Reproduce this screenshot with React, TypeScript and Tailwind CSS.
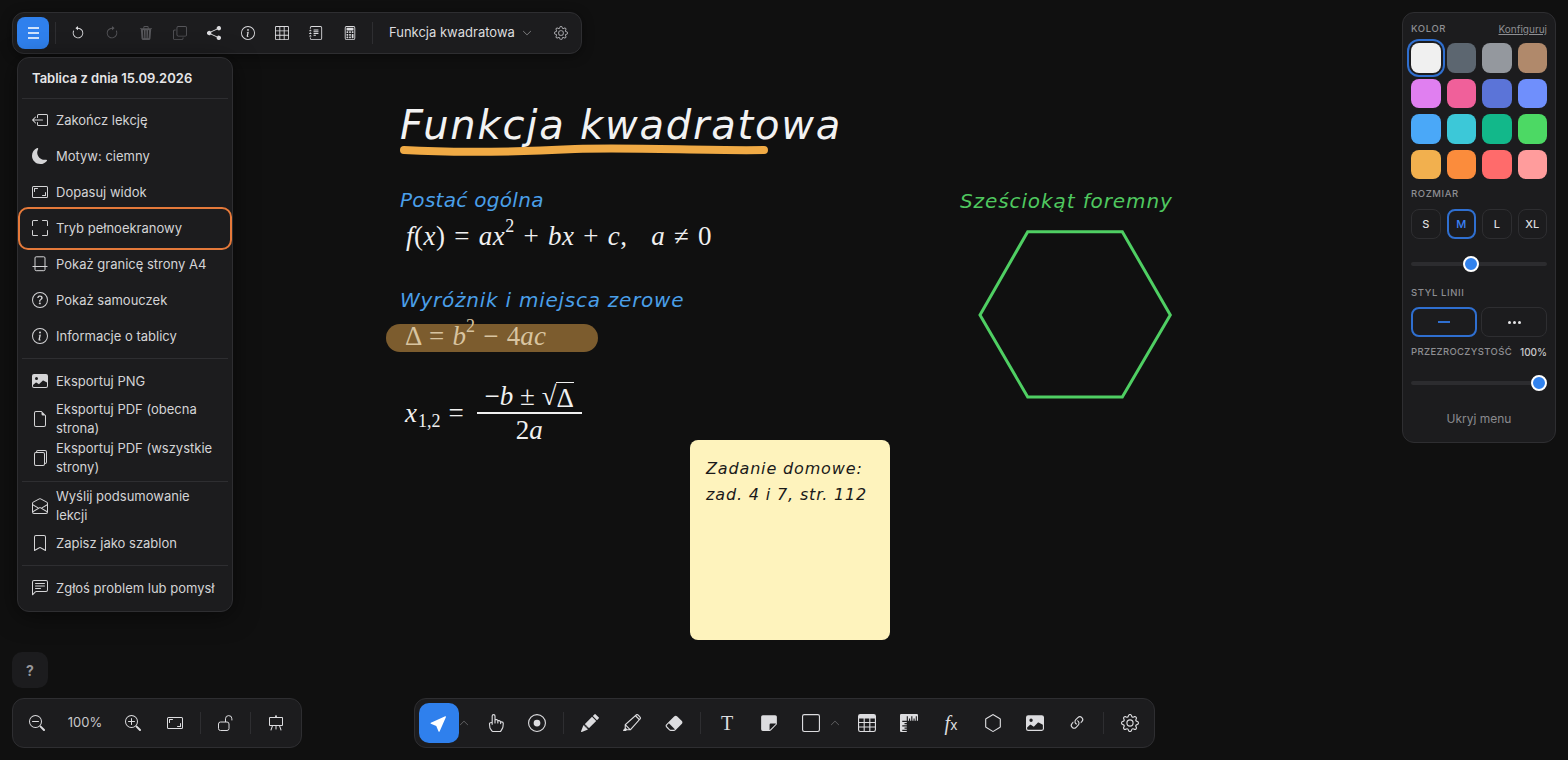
import React from "react";
import {
  BsArrowCounterclockwise, BsArrowClockwise, BsTrash3Fill, BsCopy, BsShareFill, BsInfoCircle, BsTable, BsJournalText,
  BsCalculator, BsChevronDown, BsChevronUp, BsGear, BsBoxArrowLeft, BsMoonFill, BsAspectRatio, BsFullscreen,
  BsQuestionCircle, BsImageFill, BsFileEarmark, BsFiles, BsEnvelopeOpen, BsBookmark, BsChatLeftText, BsZoomOut, BsZoomIn,
  BsEasel, BsCursorFill, BsHandIndex, BsRecordCircle, BsPencilFill, BsHighlighter, BsEraserFill,
  BsStickyFill, BsSquare, BsRulers, BsHexagon, BsLink45Deg, BsGrid3X3,
} from "react-icons/bs";

const Sep = () => <div className="w-px h-[22px] bg-[#2e2e31] shrink-0" />;
const HSep = () => <div className="h-px bg-[#2e2e31] mx-[4px] my-[4px]" />;

function TopBtn({ children, off }: { children: React.ReactNode; off?: boolean }) {
  return <div className={`w-[34px] h-[32px] flex items-center justify-center text-[14px] ${off ? "text-[#56565a]" : "text-[#dcdcdf]"}`}>{children}</div>;
}

function Tool({ children, size = "text-[18px]" }: { children: React.ReactNode; size?: string }) {
  return <div className={`w-[42px] h-[40px] flex items-center justify-center text-[#dcdcdf] ${size}`}>{children}</div>;
}

function A4Icon() {
  return (
    <svg width="16" height="16" viewBox="0 0 16 16" fill="none" stroke="currentColor" strokeWidth="1">
      <path d="M3 10.5V2a1.2 1.2 0 0 1 1.2-1.2h7.6A1.2 1.2 0 0 1 13 2v8.5" />
      <path d="M.5 10.5h15" />
      <path d="M3 10.5v3a1.2 1.2 0 0 0 1.2 1.2h7.6a1.2 1.2 0 0 0 1.2-1.2v-3" />
    </svg>
  );
}

function OpenLock() {
  return (
    <svg className="ml-[17px] shrink-0" width="16" height="16" viewBox="0 0 16 16" fill="none" stroke="currentColor" strokeWidth="1">
      <rect x="0.5" y="7" width="10.5" height="8.5" rx="2" />
      <path d="M7.5 7V3.8a3.2 3.2 0 0 1 6.4 0v1.6" />
    </svg>
  );
}

function MenuItem({ icon, children, two, active }: { icon: React.ReactNode; children: React.ReactNode; two?: boolean; active?: boolean }) {
  return (
    <div className={`relative flex items-center mx-px pl-[13px] pr-[6px] ${two ? "h-[39px]" : "h-[36px]"}`}>
      {active && <div className="absolute left-[-1px] right-[-1px] top-[-3px] bottom-[-4px] rounded-[10px] border-2 border-[#e5793a]" />}
      <div className="w-[16px] h-[16px] shrink-0 flex items-center justify-center text-[16px] text-[#d4d4d6]">{icon}</div>
      <div className="ml-[8px] text-[13px] leading-[19px] text-[#d4d4d6]">{children}</div>
    </div>
  );
}

const swatches = [
  "#f0f0f0", "#5c6670", "#94989e", "#b0896b",
  "#e07ff0", "#f0609a", "#5b74d8", "#6f8ffc",
  "#4aa8f8", "#3cc8d8", "#12b88a", "#4cd964",
  "#f2b04e", "#fb8c3c", "#ff6b6b", "#ff9c9c",
];

const Label = ({ children }: { children: React.ReactNode }) => (
  <div className="text-[9.5px] leading-[12px] tracking-[0.6px] font-medium text-[#8e8e92] uppercase">{children}</div>
);

function Slider({ pos }: { pos: string }) {
  return (
    <div className="relative h-[4px] rounded-full bg-[#2c2c2f]">
      <div className={`absolute top-[-6px] w-[16px] h-[16px] rounded-full bg-[#3182ed] border-2 border-white ${pos}`} />
    </div>
  );
}

const I = ({ children }: { children: React.ReactNode }) => <i>{children}</i>;
const Sup = ({ children }: { children: React.ReactNode }) => <sup className="text-[18px] leading-none relative top-[-3px] align-super">{children}</sup>;

const mathFont = "[font-family:'Liberation_Serif',serif]";
const handFont = "[font-family:'DejaVu_Sans',sans-serif] italic";

export default function App() {
  return (
    <div className="relative w-full h-screen overflow-hidden bg-[#101010] [font-family:'Inter',sans-serif]">
      {/* canvas */}
      <div className={`absolute left-[400px] top-[99px] text-[40px] leading-[52px] tracking-[1.8px] text-[#f2f2f2] whitespace-nowrap ${handFont}`}>Funkcja kwadratowa</div>
      <svg className="absolute left-[395px] top-[140px]" width="380" height="20" viewBox="0 0 380 20" fill="none">
        <path d="M9 10C60 13 120 12 180 9C240 7 310 11 369 10" stroke="#f0aa45" strokeWidth="8" strokeLinecap="round" />
      </svg>
      <div className={`absolute left-[400px] top-[186px] text-[20px] leading-[28px] tracking-[0.3px] text-[#4a9fe8] whitespace-nowrap ${handFont}`}>Postać ogólna</div>
      <div className={`absolute left-[406px] top-[219px] text-[27px] leading-[34px] tracking-[0.5px] [word-spacing:1.5px] text-[#f0f0f0] whitespace-nowrap ${mathFont}`}>
        <I>f</I>(<I>x</I>) = <I>ax</I><Sup>2</Sup> + <I>bx</I> + <I>c</I>, <span className="ml-[15px]"><I>a</I> ≠ 0</span>
      </div>
      <div className={`absolute left-[400px] top-[286px] text-[20px] leading-[28px] tracking-[0.75px] text-[#4a9fe8] whitespace-nowrap ${handFont}`}>Wyróżnik i miejsca zerowe</div>
      <div className="absolute left-[386px] top-[324px] w-[212px] h-[28px] rounded-full bg-[#7c5c2e]" />
      <div className={`absolute left-[405px] top-[319px] text-[27px] leading-[34px] tracking-[0.2px] [word-spacing:1px] text-[#d8c4a0] whitespace-nowrap ${mathFont}`}>
        Δ = <I>b</I><Sup>2</Sup> − 4<I>ac</I>
      </div>
      <div className={`absolute left-[405px] top-[380px] flex items-center text-[27px] text-[#f0f0f0] whitespace-nowrap ${mathFont}`}>
        <div className="flex items-baseline"><I>x</I><span className="text-[18px] ml-px relative top-[5px]">1,2</span><span className="ml-[8px]">=</span></div>
        <div className="ml-[13px] flex flex-col items-center w-[105px]">
          <div className="h-[32px] leading-[32px] flex"><span>−<I>b</I> ± √</span><span className="border-t border-[#f0f0f0] leading-[30px] h-[30px] mt-[2px]">Δ</span></div>
          <div className="w-full h-[2px] bg-[#f0f0f0]" />
          <div className="h-[32px] leading-[32px]">2<I>a</I></div>
        </div>
      </div>
      <div className={`absolute left-[960px] top-[186px] text-[20px] leading-[30px] tracking-[0.9px] text-[#4fc85f] whitespace-nowrap ${handFont}`}>Sześciokąt foremny</div>
      <svg className="absolute left-[975px] top-[225px]" width="202" height="180" viewBox="975 225 202 180" fill="none">
        <polygon points="1027.7,231.7 1122.3,231.7 1170.3,315 1122.3,397 1027.7,397 980,315" stroke="#4fcf63" strokeWidth="3" />
      </svg>
      <div className="absolute left-[690px] top-[440px] w-[200px] h-[200px] rounded-[8px] bg-[#fef3bd] pl-[16px] pt-[16px]">
        <div className={`text-[16px] leading-[26px] tracking-[0.85px] text-[#1a1a1a] whitespace-nowrap ${handFont}`}>
          <div>Zadanie domowe:</div>
          <div>zad. 4 i 7, str. 112</div>
        </div>
      </div>

      {/* top bar */}
      <div className="absolute left-[12px] top-[12px] w-[570px] h-[42px] rounded-[12px] border border-[#2e2e31] bg-[#1c1c1e] flex items-center pl-[4px] shadow-[0_2px_12px_rgba(0,0,0,0.4)]">
        <div className="w-[32px] h-[32px] rounded-[8px] bg-[#2f80ed] flex items-center justify-center shrink-0">
          <div className="flex flex-col gap-[3px]">
            <div className="w-[11px] h-[2px] bg-[#cfe2fb]" />
            <div className="w-[11px] h-[2px] bg-[#cfe2fb]" />
            <div className="w-[11px] h-[2px] bg-[#cfe2fb]" />
          </div>
        </div>
        <div className="ml-[6px]"><Sep /></div>
        <div className="ml-[5px] flex items-center">
          <TopBtn><BsArrowCounterclockwise /></TopBtn>
          <TopBtn off><BsArrowClockwise /></TopBtn>
          <TopBtn off><BsTrash3Fill /></TopBtn>
          <TopBtn off><BsCopy /></TopBtn>
          <TopBtn><BsShareFill /></TopBtn>
          <TopBtn><BsInfoCircle /></TopBtn>
          <TopBtn><BsGrid3X3 /></TopBtn>
          <TopBtn><BsJournalText /></TopBtn>
          <TopBtn><BsCalculator /></TopBtn>
        </div>
        <div className="ml-[5px]"><Sep /></div>
        <div className="ml-[16px] text-[13px] text-[#dcdcdf] whitespace-nowrap">Funkcja kwadratowa</div>
        <BsChevronDown className="ml-[7px] text-[10px] text-[#a0a0a4]" />
        <BsGear className="ml-[22px] text-[14px] text-[#a8a8ac]" />
      </div>

      {/* main menu */}
      <div className="absolute left-[17px] top-[57px] w-[216px] h-[555px] rounded-[12px] border border-[#2e2e31] bg-[#1c1c1e] shadow-[0_4px_24px_rgba(0,0,0,0.5)]">
        <div className="h-[40px] flex items-center pl-[14px] pt-[2px] text-[13px] font-semibold text-[#e6e6e8]">Tablica z dnia 15.09.2026</div>
        <div className="h-px bg-[#2e2e31] mx-[4px] mb-[3px]" />
        <MenuItem icon={<BsBoxArrowLeft />}>Zakończ lekcję</MenuItem>
        <MenuItem icon={<BsMoonFill />}>Motyw: ciemny</MenuItem>
        <MenuItem icon={<BsAspectRatio />}>Dopasuj widok</MenuItem>
        <MenuItem icon={<BsFullscreen />} active>Tryb pełnoekranowy</MenuItem>
        <MenuItem icon={<A4Icon />}>Pokaż granicę strony A4</MenuItem>
        <MenuItem icon={<BsQuestionCircle />}>Pokaż samouczek</MenuItem>
        <MenuItem icon={<BsInfoCircle />}>Informacje o tablicy</MenuItem>
        <HSep />
        <MenuItem icon={<BsImageFill />}>Eksportuj PNG</MenuItem>
        <MenuItem icon={<BsFileEarmark />} two>Eksportuj PDF (obecna strona)</MenuItem>
        <MenuItem icon={<BsFiles />} two>Eksportuj PDF (wszystkie strony)</MenuItem>
        <HSep />
        <MenuItem icon={<BsEnvelopeOpen />} two>Wyślij podsumowanie<br />lekcji</MenuItem>
        <MenuItem icon={<BsBookmark />}>Zapisz jako szablon</MenuItem>
        <HSep />
        <MenuItem icon={<BsChatLeftText />}>Zgłoś problem lub pomysł</MenuItem>
      </div>

      {/* help */}
      <div className="absolute left-[12px] top-[652px] w-[36px] h-[36px] rounded-[10px] bg-[#1c1c1e] flex items-center justify-center text-[14px] font-bold text-[#98989c]">?</div>

      {/* zoom bar */}
      <div className="absolute left-[12px] top-[698px] w-[290px] h-[50px] rounded-[12px] border border-[#2e2e31] bg-[#1c1c1e] flex items-center text-[#dcdcdf]">
        <BsZoomOut className="ml-[16px] text-[16px] shrink-0" />
        <div className="w-[48px] ml-[16px] text-center text-[13px] text-[#c8c8cb]">100%</div>
        <BsZoomIn className="ml-[16px] text-[16px] shrink-0" />
        <BsAspectRatio className="ml-[26px] text-[16px] shrink-0" />
        <div className="ml-[17px]"><Sep /></div>
        <OpenLock />
        <div className="ml-[16px]"><Sep /></div>
        <BsEasel className="ml-[17px] text-[16px] shrink-0" />
      </div>

      {/* tools */}
      <div className="absolute left-[414px] top-[698px] w-[741px] h-[50px] rounded-[12px] border border-[#2e2e31] bg-[#1c1c1e] flex items-center pl-[4px]">
        <div className="w-[40px] h-[40px] rounded-[10px] bg-[#2f80ed] flex items-center justify-center shrink-0">
          <BsCursorFill className="text-[18px] text-white" />
        </div>
        <div className="w-[10px] flex justify-center"><BsChevronUp className="text-[10px] text-[#7a7a7e] shrink-0" /></div>
        <div className="ml-[5px] flex items-center">
          <Tool><BsHandIndex /></Tool>
          <Tool><BsRecordCircle /></Tool>
        </div>
        <div className="mx-[5px]"><Sep /></div>
        <Tool><BsPencilFill /></Tool>
        <Tool><BsHighlighter /></Tool>
        <Tool><BsEraserFill /></Tool>
        <div className="mx-[5px]"><Sep /></div>
        <Tool size="text-[20px] font-normal [font-family:'Liberation_Serif',serif]">T</Tool>
        <Tool><BsStickyFill /></Tool>
        <Tool><BsSquare /></Tool>
        <div className="w-[6px] mr-[8px] flex justify-center"><BsChevronUp className="text-[10px] text-[#7a7a7e] shrink-0" /></div>
        <Tool><BsTable /></Tool>
        <Tool><BsRulers /></Tool>
        <Tool size="text-[20px]"><span className="italic [font-family:'Liberation_Serif',serif]">f<span className="not-italic [font-family:'Inter',sans-serif] text-[14px]">x</span></span></Tool>
        <Tool><BsHexagon /></Tool>
        <Tool><BsImageFill /></Tool>
        <Tool><BsLink45Deg /></Tool>
        <div className="mx-[5px]"><Sep /></div>
        <Tool><BsGear /></Tool>
      </div>

      {/* properties */}
      <div className="absolute left-[1402px] top-[12px] w-[154px] h-[431px] rounded-[12px] border border-[#2e2e31] bg-[#1c1c1e] px-[8px] pt-[9px]">
        <div className="flex items-center justify-between h-[14px]">
          <Label>Kolor</Label>
          <span className="text-[10px] leading-[12px] text-[#8e8e92] underline">Konfiguruj</span>
        </div>
        <div className="mt-[7px] grid grid-cols-4 gap-[6px]">
          {swatches.map((c, i) => (
            <div
              key={c}
              className={`aspect-square rounded-[8px] ${i === 0 ? "ring-2 ring-[#2f6fd0] ring-offset-2 ring-offset-[#1c1c1e]" : ""}`}
              style={{ backgroundColor: c }}
            />
          ))}
        </div>
        <div className="mt-[9px]"><Label>Rozmiar</Label></div>
        <div className="mt-[9px] grid grid-cols-4 gap-[6px]">
          <div className="h-[30px] rounded-[8px] border border-[#2e2e31] flex items-center justify-center text-[11px] font-medium text-[#dcdcdf]">S</div>
          <div className="h-[30px] rounded-[8px] border-2 border-[#2f6fd0] flex items-center justify-center text-[11px] font-medium text-[#3b82f6]">M</div>
          <div className="h-[30px] rounded-[8px] border border-[#2e2e31] flex items-center justify-center text-[11px] font-medium text-[#dcdcdf]">L</div>
          <div className="h-[30px] rounded-[8px] border border-[#2e2e31] flex items-center justify-center text-[11px] font-medium text-[#dcdcdf]">XL</div>
        </div>
        <div className="mt-[23px]"><Slider pos="left-[52px]" /></div>
        <div className="mt-[21px]"><Label>Styl linii</Label></div>
        <div className="mt-[8px] grid grid-cols-2 gap-[4px]">
          <div className="h-[30px] rounded-[8px] border-2 border-[#2f6fd0] flex items-center justify-center">
            <div className="w-[12px] h-[2px] bg-[#2f6fd0]" />
          </div>
          <div className="h-[30px] rounded-[8px] border border-[#2e2e31] flex items-center justify-center gap-[2px]">
            <div className="w-[3px] h-[3px] rounded-full bg-[#e6e6e8]" />
            <div className="w-[3px] h-[3px] rounded-full bg-[#e6e6e8]" />
            <div className="w-[3px] h-[3px] rounded-full bg-[#e6e6e8]" />
          </div>
        </div>
        <div className="mt-[9px] flex items-center justify-between">
          <div className="text-[9.5px] leading-[12px] tracking-[0.35px] font-medium text-[#8e8e92] uppercase">Przezroczystość</div>
          <span className="text-[10px] leading-[12px] font-medium text-[#c8c8cb]">100%</span>
        </div>
        <div className="mt-[23px]"><Slider pos="right-0" /></div>
        <div className="mt-[24px] text-center text-[12px] leading-[20px] text-[#8a8a8e]">Ukryj menu</div>
      </div>
    </div>
  );
}
